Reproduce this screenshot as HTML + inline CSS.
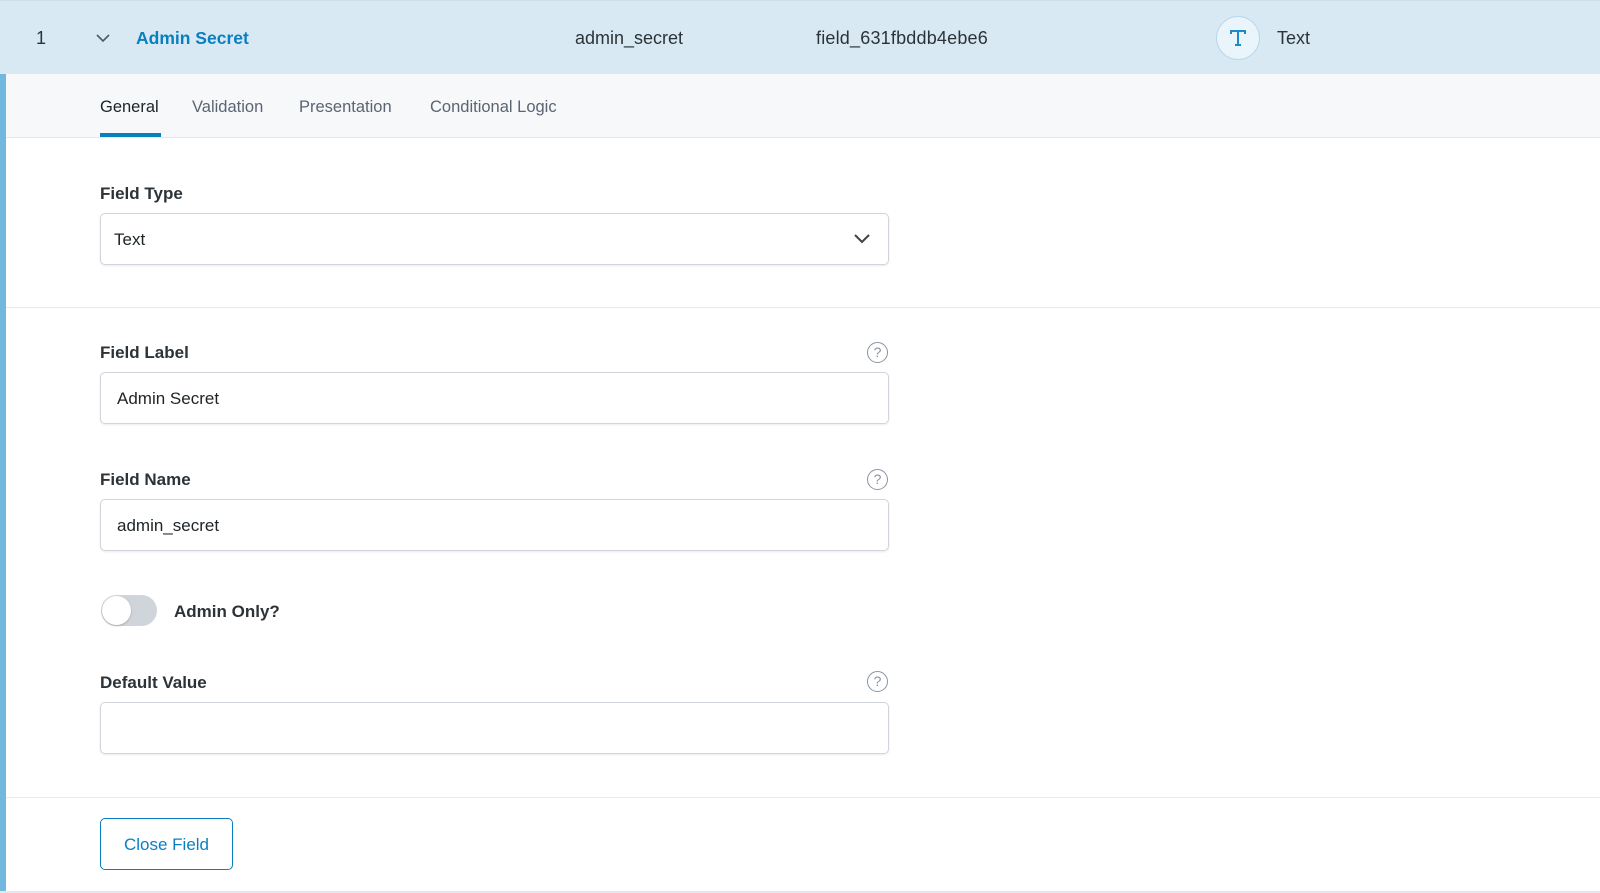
<!DOCTYPE html>
<html><head><meta charset="utf-8"><style>
*{box-sizing:border-box;margin:0;padding:0}
body{width:1600px;height:893px;overflow:hidden;background:#fff;font-family:"Liberation Sans",Arial,sans-serif;color:#1d2327;position:relative}
.abs{position:absolute}
.hdr{left:0;top:0;width:1600px;height:74px;background:#d8e9f3;border-top:1px solid #cfe0ea}
.hdr span{position:absolute;top:27px;font-size:18px;color:#2c3338}
.bar{left:0;top:74px;width:6px;height:819px;background:#72b8de}
.tabs{left:6px;top:74px;width:1594px;height:64px;background:#f7f8fa;border-bottom:1px solid #e5e7ea}
.tab{position:absolute;top:98px;font-size:16.5px;color:#5b6473}
.lbl{position:absolute;left:100px;font-size:17px;font-weight:bold;color:#2c3338}
.inp{position:absolute;left:100px;width:789px;height:52px;border:1px solid #d0d4db;border-radius:5px;box-shadow:0 1px 2px rgba(0,0,0,.08);font-size:17px;padding:16px 16px 14px;color:#1d2327}
.div{position:absolute;left:6px;width:1594px;height:1px;background:#e8eaed}
.help{position:absolute;left:867px;width:21px;height:21px;border:1.5px solid #8b93a0;border-radius:50%;font-size:14px;color:#8b93a0;text-align:center;line-height:18px}
</style></head><body>
<div class="abs hdr">
<span style="left:36px">1</span>
<svg class="abs" style="left:95px;top:31px" width="16" height="12" viewBox="0 0 16 12"><path d="M2 3l6 6 6-6" fill="none" stroke="#50575e" stroke-width="1.6"/></svg>
<span style="left:136px;color:#0a7fc0;font-weight:bold;font-size:17.5px">Admin Secret</span>
<span style="left:575px">admin_secret</span>
<span style="left:816px;letter-spacing:0.2px">field_631fbddb4ebe6</span>
<div class="abs" style="left:1216px;top:15px;width:44px;height:44px;border-radius:50%;background:#eaf4fb;border:1px solid #b3d7ec"></div>
<svg class="abs" style="left:1228px;top:27px" width="20" height="20" viewBox="0 0 20 20"><path d="M3 6V3h14v3M10 3v14M7 17h6" fill="none" stroke="#1a8cca" stroke-width="2"/></svg>
<span style="left:1277px">Text</span>
</div>
<div class="abs bar"></div>
<div class="abs tabs"></div>
<div class="tab" style="left:100px;color:#1d2327">General</div>
<div class="tab" style="left:192px">Validation</div>
<div class="tab" style="left:299px">Presentation</div>
<div class="tab" style="left:430px">Conditional Logic</div>
<div class="abs" style="left:100px;top:133px;width:61px;height:4px;background:#0a7fc0"></div>

<div class="lbl" style="top:184px">Field Type</div>
<div class="inp" style="top:213px;padding-left:13px">Text</div>
<svg class="abs" style="left:853px;top:232px" width="18" height="14" viewBox="0 0 18 14"><path d="M2 3l7 7 7-7" fill="none" stroke="#3c434a" stroke-width="2"/></svg>
<div class="div" style="top:307px"></div>

<div class="lbl" style="top:343px">Field Label</div>
<div class="help" style="top:342px">?</div>
<div class="inp" style="top:372px">Admin Secret</div>

<div class="lbl" style="top:470px">Field Name</div>
<div class="help" style="top:469px">?</div>
<div class="inp" style="top:499px">admin_secret</div>

<div class="abs" style="left:101px;top:595px;width:56px;height:31px;border-radius:16px;background:#d0d4db"></div>
<div class="abs" style="left:102px;top:596px;width:29px;height:29px;border-radius:50%;background:#fff;box-shadow:0 1px 2px rgba(0,0,0,.2)"></div>
<div class="lbl" style="left:174px;top:602px">Admin Only?</div>

<div class="lbl" style="top:673px">Default Value</div>
<div class="help" style="top:671px">?</div>
<div class="inp" style="top:702px"></div>
<div class="div" style="top:797px"></div>

<div class="abs" style="left:100px;top:818px;width:133px;height:52px;border:1.5px solid #0a7fc0;border-radius:5px;color:#0a7fc0;font-size:17px;text-align:center;line-height:51px">Close Field</div>
<div class="abs" style="left:0;top:891px;width:1600px;height:2px;background:#e5e7ea"></div>
</body></html>
